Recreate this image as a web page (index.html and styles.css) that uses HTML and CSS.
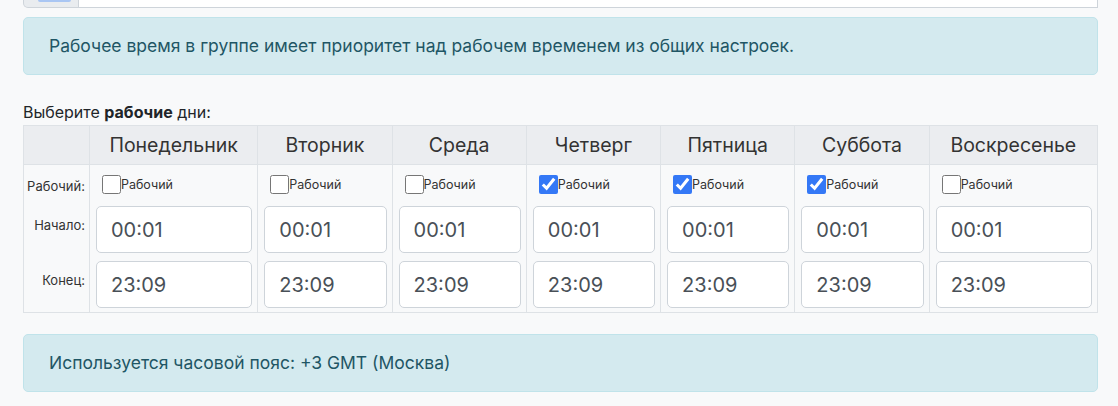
FILE: index.html
```html
<!DOCTYPE html>
<html lang="ru">
<head>
    <meta charset="UTF-8">
    <meta name="viewport" content="width=device-width, initial-scale=1.0">
    <title>Рабочее время</title>
    <link rel="stylesheet" href="styles.css">
</head>
<body>
    <div class="page">
        <div class="input-group">
            <div class="group-addon"><span class="addon-chip"></span></div>
            <div class="group-input"></div>
        </div>

        <div class="alert">Рабочее время в группе имеет приоритет над рабочем временем из общих настроек.</div>

        <p class="days-title">Выберите <b>рабочие</b> дни:</p>

        <table class="days-table">
            <thead>
                <tr>
                    <th class="col-label"></th>
                    <th class="col-wide">Понедельник</th>
                    <th>Вторник</th>
                    <th>Среда</th>
                    <th>Четверг</th>
                    <th>Пятница</th>
                    <th>Суббота</th>
                    <th class="col-wide">Воскресенье</th>
                </tr>
            </thead>
            <tbody>
                <tr class="row-check">
                    <td class="row-label">Рабочий:</td>
                    <td><label class="day-check"><input type="checkbox">Рабочий</label></td>
                    <td><label class="day-check"><input type="checkbox">Рабочий</label></td>
                    <td><label class="day-check"><input type="checkbox">Рабочий</label></td>
                    <td><label class="day-check"><input type="checkbox" checked>Рабочий</label></td>
                    <td><label class="day-check"><input type="checkbox" checked>Рабочий</label></td>
                    <td><label class="day-check"><input type="checkbox" checked>Рабочий</label></td>
                    <td><label class="day-check"><input type="checkbox">Рабочий</label></td>
                </tr>
                <tr class="row-time row-start">
                    <td class="row-label">Начало:</td>
                    <td><input class="time-input" type="text" value="00:01"></td>
                    <td><input class="time-input" type="text" value="00:01"></td>
                    <td><input class="time-input" type="text" value="00:01"></td>
                    <td><input class="time-input" type="text" value="00:01"></td>
                    <td><input class="time-input" type="text" value="00:01"></td>
                    <td><input class="time-input" type="text" value="00:01"></td>
                    <td><input class="time-input" type="text" value="00:01"></td>
                </tr>
                <tr class="row-time row-end">
                    <td class="row-label">Конец:</td>
                    <td><input class="time-input" type="text" value="23:09"></td>
                    <td><input class="time-input" type="text" value="23:09"></td>
                    <td><input class="time-input" type="text" value="23:09"></td>
                    <td><input class="time-input" type="text" value="23:09"></td>
                    <td><input class="time-input" type="text" value="23:09"></td>
                    <td><input class="time-input" type="text" value="23:09"></td>
                    <td><input class="time-input" type="text" value="23:09"></td>
                </tr>
            </tbody>
        </table>

        <div class="alert alert-bottom">Используется часовой пояс: +3 GMT (Москва)</div>
    </div>
</body>
</html>
```

FILE: styles.css
```css
body {
    background-color: #f8f9fa;
    font-family: Inter, "Liberation Sans", sans-serif;
    color: #212529;
    margin: 0;
    padding: 0;
}

.page {
    padding: 0 20px 0 23px;
}

.input-group {
    display: flex;
    height: 8px;
}

.group-addon {
    width: 56px;
    background-color: #e9ecef;
    border: 1px solid #ced4da;
    border-top: none;
    border-radius: 0 0 0 5px;
    padding-left: 14px;
    box-sizing: border-box;
}

.addon-chip {
    display: block;
    width: 33px;
    height: 2px;
    background-color: #a9c6f3;
    border-radius: 0 0 3px 3px;
}

.group-input {
    flex: 1;
    background-color: white;
    border: 1px solid #ced4da;
    border-top: none;
    border-left: none;
}

.alert {
    margin-top: 9px;
    padding: 17px 25px;
    background-color: #d4eaef;
    border: 1px solid #c0e3ea;
    border-radius: 5px;
    color: #1f5665;
    font-size: 17.5px;
    line-height: 22px;
}

.alert-bottom {
    margin-top: 21px;
}

.days-title {
    margin: 28px 0 4px;
    font-size: 16px;
    line-height: 18px;
}

.days-table {
    width: 100%;
    border-collapse: collapse;
    border: 1px solid #dee2e6;
}

.days-table th {
    width: 134px;
    height: 38px;
    background-color: #ebedf0;
    border: 1px solid #dee2e6;
    font-size: 19.5px;
    font-weight: normal;
    color: #333;
    text-align: center;
    padding: 0;
}

.days-table th.col-label {
    width: 65px;
}

.days-table th.col-wide {
    width: 168px;
}

.days-table td {
    border-left: 1px solid #dee2e6;
    border-right: 1px solid #dee2e6;
    padding: 4px 5px 4px 6px;
}

.row-check td {
    height: 31px;
    vertical-align: middle;
}

.row-start td {
    padding-top: 2px;
}

.days-table td.row-label {
    font-size: 13px;
    color: #333;
    text-align: right;
    vertical-align: top;
    padding: 13px 4px 0 0;
}

.days-table .row-end td.row-label {
    padding-top: 15px;
}

.days-table .row-check td.row-label {
    padding-top: 2px;
    vertical-align: middle;
}

.day-check {
    display: flex;
    align-items: center;
    font-size: 12.5px;
    color: #333;
    padding-left: 6px;
}

.day-check input {
    width: 19px;
    height: 19px;
    margin: 0;
    accent-color: #3478f6;
}

.time-input {
    display: block;
    width: 100%;
    height: 47px;
    box-sizing: border-box;
    border: 1px solid #ced4da;
    border-radius: 5px;
    background-color: white;
    padding: 0 0 0 14px;
    font-family: Inter, "Liberation Sans", sans-serif;
    font-size: 20px;
    color: #495057;
}
```
